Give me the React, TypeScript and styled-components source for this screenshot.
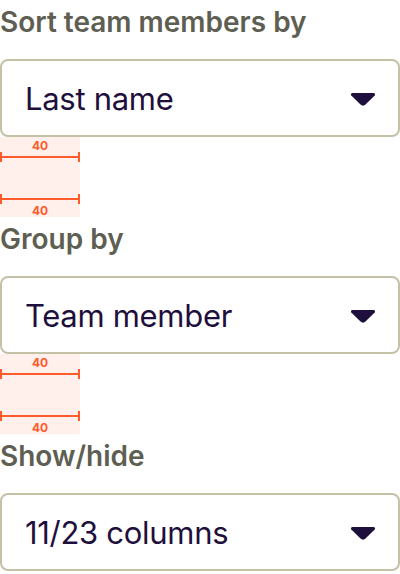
import styled, { createGlobalStyle } from "styled-components";

const GlobalStyle = createGlobalStyle`
  html, body {
    margin: 0;
    padding: 0;
    background: #ffffff;
  }
  body {
    font-family: Inter, "Noto Sans", sans-serif;
  }
`;

const Page = styled.div`
  width: 400px;
  display: flex;
  flex-direction: column;
`;

const Label = styled.div`
  height: 59px;
  font-size: 28px;
  font-weight: 600;
  line-height: 44px;
  color: #5e5e52;
  letter-spacing: 0;
`;

const SelectBox = styled.div`
  height: 78px;
  box-sizing: border-box;
  border: 2px solid #c5c1a6;
  border-radius: 8px;
  display: flex;
  align-items: center;
  justify-content: space-between;
  padding: 0 22px 0 23px;
  font-size: 31px;
  font-weight: 400;
  color: #1f0f3c;
  letter-spacing: -0.3px;
`;

const Caret = styled.svg`
  width: 26px;
  height: 14px;
  margin-top: 2px;
`;

const Spacer = styled.div`
  width: 80px;
  height: 80px;
  background: #fff0ec;
  display: flex;
  flex-direction: column;
  justify-content: space-between;
  padding: 2px 0 0;
  box-sizing: border-box;
`;

const Measure = styled.div<{ $below?: boolean }>`
  display: flex;
  flex-direction: ${(p) => (p.$below ? "column-reverse" : "column")};
  align-items: center;
`;

const MeasureText = styled.span`
  font-size: 12px;
  font-weight: 700;
  line-height: 13px;
  color: #ff5a2b;
`;

const MeasureLine = styled.div`
  position: relative;
  width: 80px;
  height: 10px;

  &::before {
    content: "";
    position: absolute;
    left: 0;
    right: 0;
    top: 4px;
    height: 2px;
    background: #ff5a2b;
  }
  &::after {
    content: "";
    position: absolute;
    inset: 0;
    border-left: 2px solid #ff5a2b;
    border-right: 2px solid #ff5a2b;
  }
`;

const Gap = ({ value }: { value: number }) => (
  <Spacer>
    <Measure>
      <MeasureText>{value}</MeasureText>
      <MeasureLine />
    </Measure>
    <Measure $below>
      <MeasureText>{value}</MeasureText>
      <MeasureLine />
    </Measure>
  </Spacer>
);

const Select = ({ value }: { value: string }) => (
  <SelectBox>
    <span>{value}</span>
    <Caret viewBox="0 0 26 14">
      <path
        d="M2.5 1h21c1.3 0 2 1.4 1.2 2.4l-9.2 9.2c-1.4 1.4-3.6 1.4-5 0L1.3 3.4C0.5 2.4 1.2 1 2.5 1z"
        fill="#1f0f3c"
      />
    </Caret>
  </SelectBox>
);

export default function App() {
  return (
    <Page>
      <GlobalStyle />
      <Label>Sort team members by</Label>
      <Select value="Last name" />
      <Gap value={40} />
      <Label>Group by</Label>
      <Select value="Team member" />
      <Gap value={40} />
      <Label>Show/hide</Label>
      <Select value="11/23 columns" />
    </Page>
  );
}
